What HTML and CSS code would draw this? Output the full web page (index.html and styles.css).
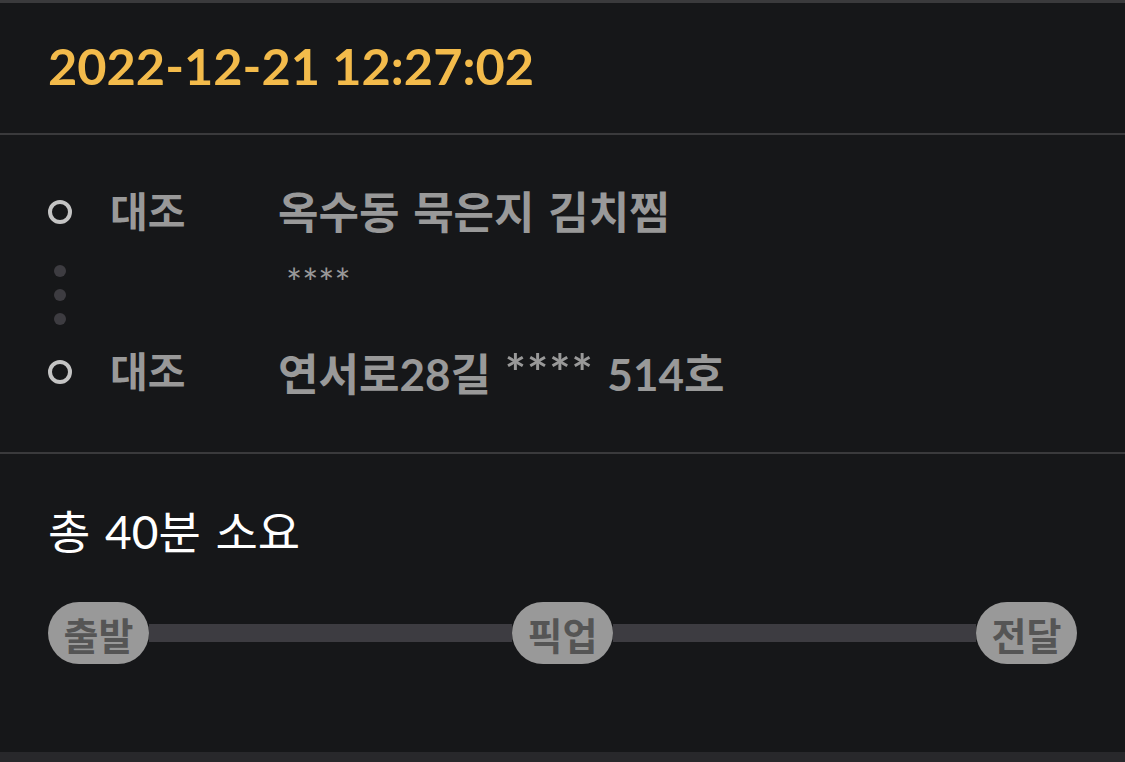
FILE: index.html
```html
<html>
<head>
	<meta charset="UTF-8">
	<title>배달 상세</title>
	<link rel="stylesheet" href="styles.css">
</head>
<body>

	<div class="order">
		<div class="order_head">
			<div class="order_time">2022-12-21 12:27:02</div>
		</div>

		<div class="order_route">
			<div class="mark"><span class="ring"></span></div>
			<div class="route_label">대조</div>
			<div class="route_addr">옥수동 묵은지 김치찜</div>

			<div class="mark mark_dots">
				<span class="dot"></span>
				<span class="dot"></span>
				<span class="dot"></span>
			</div>
			<div></div>
			<div class="route_sub">****</div>

			<div class="mark"><span class="ring"></span></div>
			<div class="route_label">대조</div>
			<div class="route_addr">연서로28길 <span class="stars">****</span> 514호</div>
		</div>

		<div class="order_time_total">
			<div class="total_title">총 40분 소요</div>
			<div class="timeline">
				<span class="step">출발</span>
				<span class="track"></span>
				<span class="step">픽업</span>
				<span class="track"></span>
				<span class="step">전달</span>
			</div>
		</div>
	</div>

</body>
</html>
```

FILE: styles.css
```css
html, body{
	margin: 0;
	padding: 0;
	background: #161719;
}
body{
	font-family: Lato, "Noto Sans CJK KR", sans-serif;
	height: 762px;
	overflow: hidden;
}
.order{
	border-top: 3px solid #3a3a3c;
	border-bottom: 10px solid #28282b;
	height: 749px;
	box-sizing: content-box;
}
.order_head{
	height: 132px;
	display: flex;
	align-items: center;
	padding: 0 48px 4px;
	border-bottom: 2px solid #3a3a3c;
	box-sizing: border-box;
}
.order_time{
	color: #f3bb4b;
	font-size: 50.5px;
	font-weight: bold;
	line-height: 60px;
}

.order_route{
	display: grid;
	grid-template-columns: 24px 130px 1fr;
	column-gap: 38px;
	padding: 53px 48px 54px;
	border-bottom: 2px solid #3a3a3c;
	color: #999999;
}
.mark{
	display: flex;
	align-items: center;
	justify-content: center;
	height: 48px;
}
.ring{
	width: 24px;
	height: 24px;
	border: 4px solid #c4c4c4;
	border-radius: 50%;
	box-sizing: border-box;
}
.mark_dots{
	height: 112px;
	flex-direction: column;
	gap: 12px;
	padding-top: 6px;
	box-sizing: border-box;
}
.dot{
	width: 12px;
	height: 12px;
	border-radius: 50%;
	background: #3d3c41;
}
.route_label, .route_addr{
	font-weight: bold;
	line-height: 48px;
	white-space: nowrap;
}
.route_label{
	font-size: 41px;
}
.route_addr{
	font-size: 44px;
	word-spacing: 3px;
}
.route_addr .stars{
	font-size: 50px;
	letter-spacing: 1px;
}
.route_sub{
	font-size: 38px;
	line-height: 40px;
	padding: 26px 0 0 8px;
}

.order_time_total{
	padding: 48px 48px 0;
}
.total_title{
	color: #ffffff;
	font-size: 46px;
	line-height: 60px;
	word-spacing: 3px;
}
.timeline{
	display: flex;
	align-items: center;
	margin-top: 40px;
}
.step{
	width: 101px;
	height: 62px;
	border-radius: 31px;
	background: #999999;
	color: #555555;
	font-size: 38px;
	font-weight: bold;
	display: flex;
	align-items: center;
	justify-content: center;
}
.track{
	flex: 1;
	height: 18px;
	background: #3d3c41;
}
```
